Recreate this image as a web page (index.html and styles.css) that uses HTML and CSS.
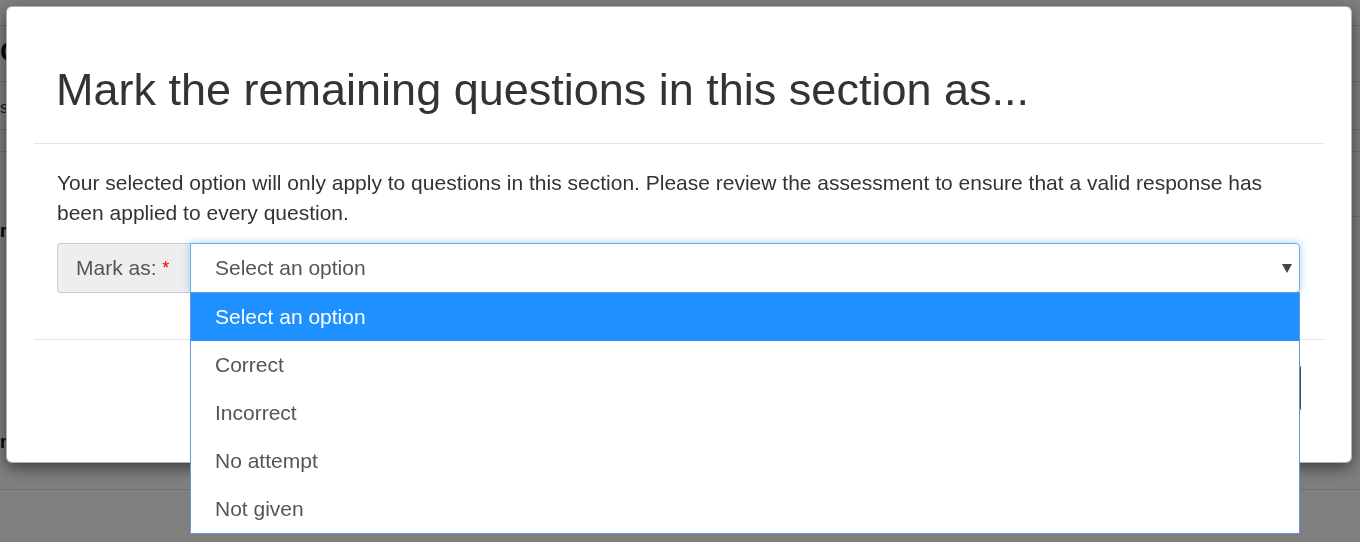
FILE: index.html
```html
<!DOCTYPE html>
<html lang="en">
<head>
<meta charset="utf-8">
<title>Mark remaining questions</title>
<link rel="stylesheet" href="styles.css">
</head>
<body>
<div class="page">
  <div class="bg-bar"></div>
  <div class="bg-head">Grading</div>
  <div class="bg-sub">sections</div>
  <div class="bg-row"></div>
  <div class="bg-table">
    <div class="bg-trow tall1"></div>
    <div class="bg-trow tall2">reading</div>
    <div class="bg-trow tall3"></div>
    <div class="bg-trow tall4">notes</div>
  </div>
</div>
<div class="backdrop"></div>
<div class="modal">
  <div class="modal-header">
    <h1 class="modal-title">Mark the remaining questions in this section as...</h1>
  </div>
  <div class="modal-body">
    <p class="intro">Your selected option will only apply to questions in this section. Please review the assessment to ensure that a valid response has been applied to every question.</p>
    <div class="input-group">
      <span class="addon">Mark as: <span class="req">*</span></span>
      <div class="select">
        <span class="select-value">Select an option</span>
        <span class="caret"></span>
        <ul class="dropdown">
          <li class="option active">Select an option</li>
          <li class="option">Correct</li>
          <li class="option">Incorrect</li>
          <li class="option">No attempt</li>
          <li class="option">Not given</li>
        </ul>
      </div>
    </div>
  </div>
  <div class="modal-footer">
    <button class="btn">Cancel</button>
    <button class="btn">Save</button>
  </div>
</div>
</body>
</html>
```

FILE: styles.css
```css
* { box-sizing: border-box; }
html, body { margin: 0; padding: 0; }
body {
  width: 1360px;
  height: 542px;
  overflow: hidden;
  background: #fff;
  font-family: "Liberation Sans", Arial, sans-serif;
  color: #333;
}
.page { width: 1360px; }
.bg-bar { height: 26px; border-bottom: 1px solid #ddd; }
.bg-head {
  height: 56px;
  border-bottom: 1px solid #ddd;
  font-size: 28px;
  font-weight: bold;
  line-height: 40px;
  padding-top: 6px;
  color: #111;
}
.bg-sub {
  height: 48px;
  border-bottom: 1px solid #ddd;
  font-size: 16px;
  line-height: 24px;
  padding-top: 14px;
}
.bg-row { height: 22px; border-bottom: 1px solid #ddd; }
.bg-table { padding-left: 20px; }
.bg-trow { border-bottom: 1px solid #ddd; font-size: 18px; font-weight: bold; color: #111; }
.tall1 { height: 65px; }
.tall2 { height: 68px; padding-top: 4px; margin-left: -20px; border-bottom-color: transparent; }
.tall3 { height: 147px; border-bottom-color: transparent; }
.tall4 { height: 58px; padding-top: 0; margin-left: -20px; }

.backdrop {
  position: fixed;
  inset: 0;
  background: rgba(0, 0, 0, 0.5);
}

.modal {
  position: absolute;
  top: 6px;
  left: 6px;
  width: 1346px;
  background: #fff;
  border: 1px solid rgba(0, 0, 0, 0.3);
  border-radius: 6px;
  box-shadow: 0 5px 15px rgba(0, 0, 0, 0.5);
}
.modal-header {
  margin: 0 27px;
  padding: 58px 22px 28px;
  border-bottom: 1px solid #e5e5e5;
}
.modal-title {
  margin: 0;
  font-size: 45px;
  font-weight: normal;
  line-height: 50px;
  color: #333;
}
.modal-body {
  padding: 24px 51px 46px 50px;
}
.intro {
  margin: 0 0 15px;
  font-size: 21px;
  line-height: 30px;
  color: #333;
}
.input-group {
  display: flex;
  height: 50px;
}
.addon {
  display: flex;
  align-items: center;
  width: 133px;
  padding-left: 18px;
  background: #eee;
  border: 1px solid #ccc;
  border-right: 0;
  border-radius: 4px 0 0 4px;
  font-size: 21px;
  color: #555;
  white-space: pre;
}
.req { color: #e00; font-size: 18px; }
.select {
  position: relative;
  flex: 1;
  display: flex;
  align-items: center;
  padding-left: 24px;
  border: 1px solid #66afe9;
  border-radius: 0 4px 4px 0;
  box-shadow: 0 0 8px rgba(102, 175, 233, 0.6);
  font-size: 21px;
  color: #555;
}
.select-value { flex: 1; }
.caret {
  width: 0;
  height: 0;
  margin-right: 7px;
  border-left: 5px solid transparent;
  border-right: 5px solid transparent;
  border-top: 9px solid #444;
}
.dropdown {
  position: absolute;
  left: -1px;
  right: -1px;
  top: 48px;
  margin: 0;
  padding: 0;
  list-style: none;
  background: #fff;
  border: 1px solid #6a95dc;
  z-index: 2;
}
.option {
  height: 48px;
  display: flex;
  align-items: center;
  padding-left: 24px;
  font-size: 21px;
  color: #555;
}
.option.active { background: #1e90ff; color: #fff; }

.modal-footer {
  margin: 0 27px;
  padding: 24px 23px 50px 22px;
  border-top: 1px solid #e5e5e5;
  display: flex;
  justify-content: flex-end;
  gap: 8px;
}
.btn {
  height: 48px;
  padding: 0 18px;
  background: #fff;
  border: 1px solid #444;
  border-radius: 4px;
  font-family: "Liberation Sans", Arial, sans-serif;
  font-size: 18px;
  color: #333;
}
```
